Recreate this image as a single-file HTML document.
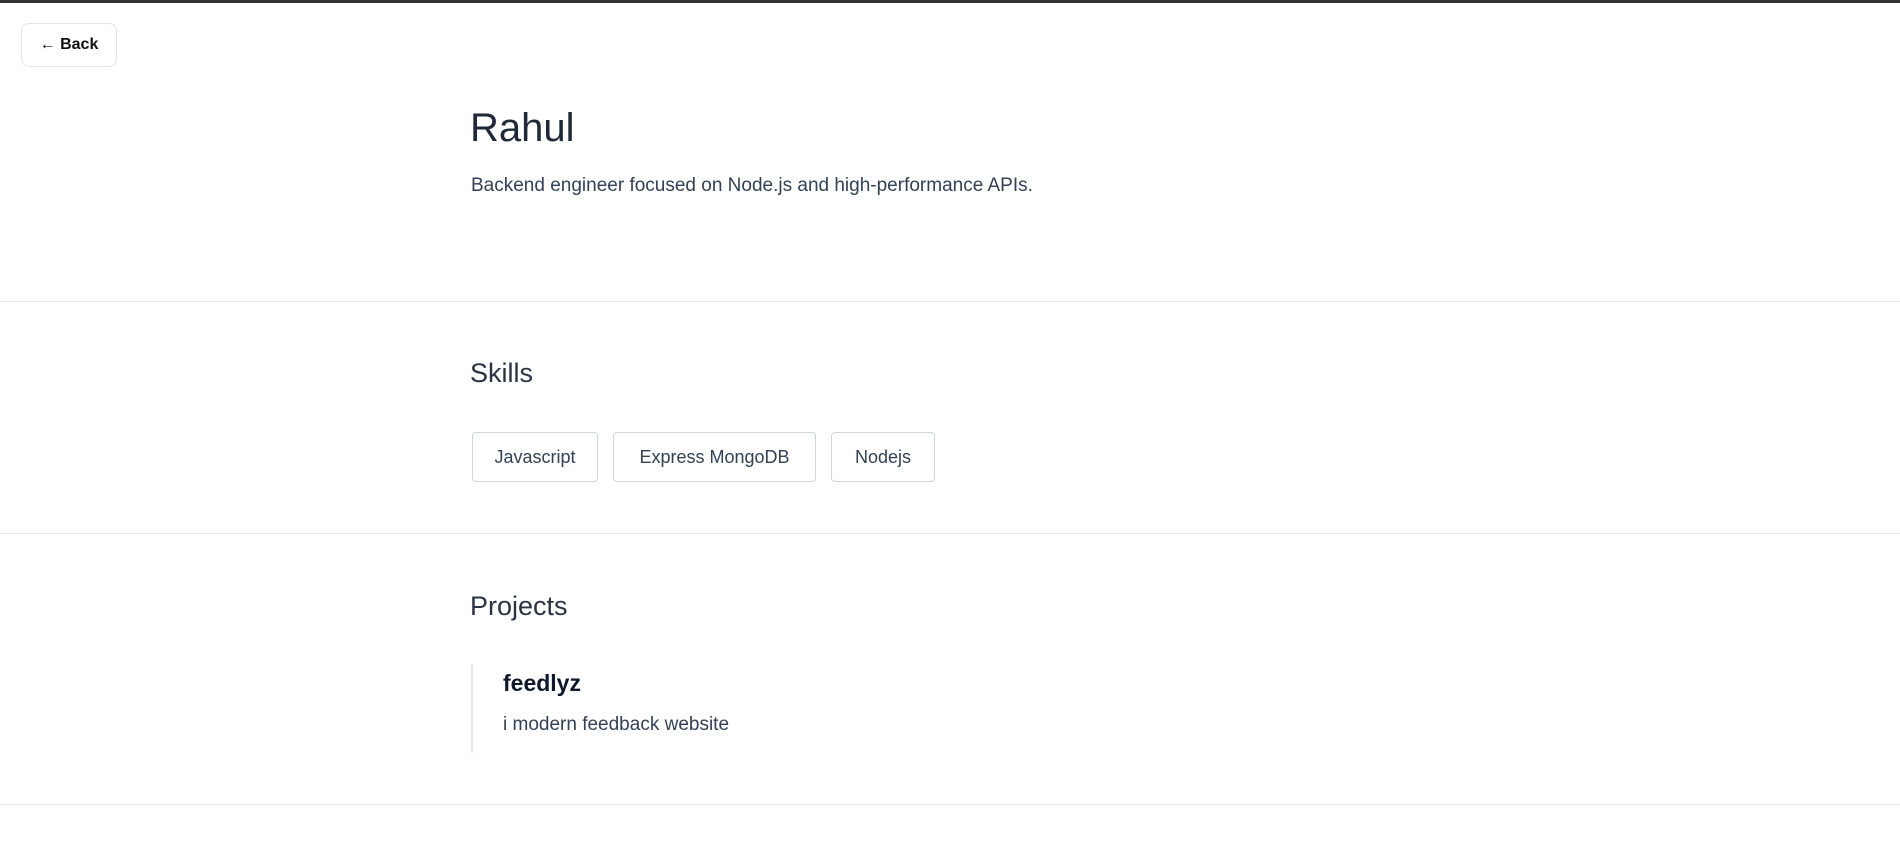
<!DOCTYPE html>
<html><head><meta charset="utf-8"><style>
body{margin:0;width:1900px;height:867px;background:#fff;font-family:"Liberation Sans",sans-serif;position:relative;overflow:hidden;color:#0f172a}
.top{position:absolute;left:0;top:0;width:1900px;height:3px;background:#333}
.back{position:absolute;left:21px;top:23px;width:96px;height:44px;border:1px solid #e2e4e8;border-radius:8px;box-sizing:border-box;font-size:16px;font-weight:bold;line-height:42px;text-align:center;color:#111}
.hr{position:absolute;left:0;width:1900px;height:1px;background:#e5e7eb}
.abs{position:absolute;white-space:nowrap}
.chip{position:absolute;top:432px;height:50px;border:1px solid #d1d5db;border-radius:4px;box-sizing:border-box;font-size:18px;color:#334155;line-height:48px;text-align:center}
</style></head><body>
<div class="top"></div>
<div class="back">← Back</div>
<div class="abs" style="left:470px;top:106px;font-size:40px;color:#1f2937">Rahul</div>
<div class="abs" style="left:471px;top:175px;font-size:19px;color:#334155">Backend engineer focused on Node.js and high-performance APIs.</div>
<div class="hr" style="top:301px"></div>
<div class="abs" style="left:470px;top:358px;font-size:27px;color:#2b3342">Skills</div>
<div class="chip" style="left:472px;width:126px">Javascript</div>
<div class="chip" style="left:613px;width:203px">Express MongoDB</div>
<div class="chip" style="left:831px;width:104px">Nodejs</div>
<div class="hr" style="top:533px"></div>
<div class="abs" style="left:470px;top:591px;font-size:27px;color:#2b3342">Projects</div>
<div style="position:absolute;left:471px;top:664px;width:2px;height:89px;background:#e5e7eb"></div>
<div class="abs" style="left:503px;top:670px;font-size:23px;font-weight:bold;color:#0f172a">feedlyz</div>
<div class="abs" style="left:503px;top:714px;font-size:19px;color:#334155">i modern feedback website</div>
<div class="hr" style="top:804px"></div>
</body></html>
